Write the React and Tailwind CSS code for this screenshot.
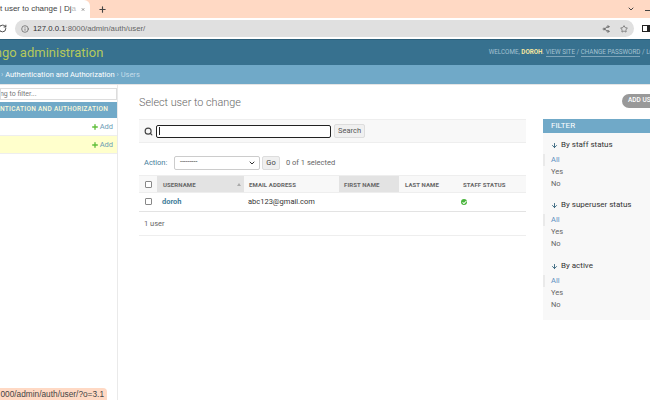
import { Search, Plus, ChevronDown, X, RotateCw, Info, Share2, Star, Check, ArrowDown } from "lucide-react"

const filters = [
    { title: "By staff status", mt: "mt-0" },
    { title: "By superuser status", mt: "mt-[7px]" },
    { title: "By active", mt: "mt-[8px]" },
]

function FilterGroup({ title, mt }) {
    return (
        <div className={mt}>
            <div className="flex items-center gap-[3px] h-[16px] pl-[8px] text-[#333] text-[8px] leading-[16px]">
                <ArrowDown size={7} strokeWidth={3} className="text-[#2f5f78]" />
                {title}
            </div>
            <div className="mt-[1px] text-[7.5px] text-[#666]">
                <div className="h-[12px] leading-[12px] pl-[6px] border-l-[2px] border-[#eaeaea] text-[#5a8fc0]">All</div>
                <div className="h-[12px] leading-[12px] pl-[8px]">Yes</div>
                <div className="h-[12px] leading-[12px] pl-[8px]">No</div>
            </div>
        </div>
    )
}

export default function App() {
    return (
        <div className="w-[650px] h-[400px] overflow-hidden relative bg-white font-['Roboto',sans-serif]">
            {/* Tabs */}
            <div className="h-[18px] bg-[#ffd9c4] flex relative">
                <div className="w-[90px] bg-white rounded-tr-[6px] flex items-center justify-end pr-[5px]">
                    <span className="text-[#444] text-[8px] whitespace-nowrap font-['Liberation_Sans',sans-serif] mr-[5px]">t user to change | Dj<span className="text-[#bbb]">a</span></span>
                    <X size={9} strokeWidth={3} className="text-[#444]" />
                </div>
                <div className="flex items-center ml-[8px]">
                    <Plus size={9} strokeWidth={3} className="text-[#444]" />
                </div>
                <div className="flex-1 flex items-center justify-end gap-[10px]">
                    <ChevronDown size={8} strokeWidth={3} className="text-[#444]" />
                    <div className="w-[5px] h-[1px] bg-[#444] mt-[3px]"></div>
                </div>
            </div>
            {/* Toolbar */}
            <div className="h-[21px] bg-white flex items-center">
                <RotateCw size={9} strokeWidth={2.5} className="text-[#444] ml-[-2px] mr-[8px]" />
                <div className="w-[620px] h-[17px] bg-[#e0e0e0] rounded-full flex items-center pl-[6px] pr-[6px]">
                    <Info size={8} className="text-[#555]" />
                    <span className="ml-[4px] text-[7.8px] text-[#333] font-['Liberation_Sans',sans-serif]">127.0.0.1<span className="text-[#666]">:8000/admin/auth/user/</span></span>
                    <Share2 size={8} className="text-[#555] ml-auto" />
                    <Star size={8} className="text-[#555] ml-[10px]" />
                </div>
                <div className="w-[8px] h-[7px] shrink-0 border-[1.5px] border-[#222] border-r-[3px] ml-[8px]"></div>
            </div>
            {/* Django header */}
            <div className="h-[26px] bg-[#37718f] border-t border-[#2c5f7a] flex items-center justify-between">
                <span className="text-[#b5c95c] text-[13px] ml-[-24px] whitespace-nowrap">Django administration</span>
                <span className="text-[6.3px] text-[#a4c2d2] whitespace-nowrap mr-[-8px]">
                    WELCOME, <b className="text-[#f5e6a0]">DOROH</b>. <span className="border-b border-[#7ea5ba]">VIEW SITE</span> / <span className="border-b border-[#7ea5ba]">CHANGE PASSWORD</span> / LOG
                </span>
            </div>
            {/* Breadcrumbs */}
            <div className="h-[19px] bg-[#70a9c8] flex items-center text-[7.5px] whitespace-nowrap text-[#c4dce8] pl-[1px] pt-[1px]">
                ›&nbsp;<span className="text-white">Authentication and Authorization</span>&nbsp;›&nbsp;Users
            </div>

            <div className="flex h-[316px] border-t border-[#e5e5e5]">
                {/* Sidebar */}
                <div className="w-[118px] shrink-0 border-r border-[#eaeaea] pt-[3px]">
                    <div className="h-[12px] w-[117px] bg-white border border-[#ddd] flex items-center overflow-hidden text-[7px] text-[#777]">
                        <span className="ml-[-1px] whitespace-nowrap">ng to filter...</span>
                    </div>
                    <div className="mt-[2px] h-[16px] bg-[#70a9c8] text-[#fdf9d8] text-[6.5px] font-medium tracking-[0.3px] flex items-center whitespace-nowrap overflow-hidden">
                        NTICATION AND AUTHORIZATION
                    </div>
                    <div className="h-[18px] border-b border-[#eee] flex items-center justify-end pr-[4px] text-[7.5px] text-[#6d9db5]">
                        <Plus size={8} strokeWidth={4} className="text-[#5fbf3a] mr-[1px]" />Add
                    </div>
                    <div className="h-[18px] bg-[#ffffcc] border-b border-[#eee] flex items-center justify-end pr-[4px] text-[7.5px] text-[#6d9db5]">
                        <Plus size={8} strokeWidth={4} className="text-[#5fbf3a] mr-[1px]" />Add
                    </div>
                </div>

                {/* Main column */}
                <div className="w-[387px] ml-[21px] shrink-0">
                    <h1 className="text-[10.8px] text-[#666] mt-[11px] h-[14px] leading-[14px] font-light">Select user to change</h1>
                    <div className="mt-[9px] h-[24px] bg-[#f8f8f8] border-y border-[#eee] flex items-center pl-[5px]">
                        <Search size={9} strokeWidth={3} className="text-[#444]" />
                        <div className="ml-[3px] w-[175px] h-[13px] bg-white border border-[#222] rounded-[2px] flex items-center pl-[2px]">
                            <div className="w-[1px] h-[8px] bg-[#222]"></div>
                        </div>
                        <div className="ml-[3px] w-[31px] h-[14px] bg-[#f0f0f0] border border-[#ddd] rounded-[2px] text-[7.5px] text-[#555] flex items-center justify-center">Search</div>
                    </div>
                    <div className="mt-[12px] h-[15px] flex items-center text-[7.5px] pl-[5px]">
                        <span className="w-[30px] text-[#447e9b]">Action:</span>
                        <div className="w-[86px] h-[14px] bg-white border border-[#ccc] rounded-[2px] flex items-center justify-between px-[5px] text-[#333]">
                            <span className="text-[7px]">---------</span>
                            <ChevronDown size={8} strokeWidth={3} className="mr-[-2px]" />
                        </div>
                        <div className="ml-[2px] w-[18px] h-[14px] bg-[#f0f0f0] border border-[#ddd] rounded-[2px] text-[#444] flex items-center justify-center">Go</div>
                        <span className="ml-[6px] text-[#666]">0 of 1 selected</span>
                    </div>
                    {/* Table */}
                    <div className="mt-[5px] h-[18px] bg-[#f8f8f8] border-y border-[#eee] flex items-stretch text-[6px] font-bold tracking-[0.1px] text-[#666]">
                        <div className="w-[18px] flex items-center pl-[6px]">
                            <div className="w-[7px] h-[7px] bg-white border border-[#888] rounded-[1px]"></div>
                        </div>
                        <div className="w-[87px] bg-[#e3e3e3] flex items-center justify-between pl-[6px] pr-[3px]">
                            USERNAME
                            <span className="w-0 h-0 border-x-[2.5px] border-x-transparent border-b-[3px] border-b-[#aaa]"></span>
                        </div>
                        <div className="w-[95px] flex items-center pl-[5px]">EMAIL ADDRESS</div>
                        <div className="w-[60px] bg-[#e3e3e3] flex items-center pl-[5px]">FIRST NAME</div>
                        <div className="w-[58px] flex items-center pl-[6px]">LAST NAME</div>
                        <div className="flex-1 flex items-center pl-[6px]">STAFF STATUS</div>
                    </div>
                    <div className="h-[19px] border-b border-[#e3e3e3] flex items-center text-[7.5px]">
                        <div className="w-[18px] pl-[6px]">
                            <div className="w-[7px] h-[7px] bg-white border border-[#888] rounded-[1px] mt-[-1px]"></div>
                        </div>
                        <div className="w-[86px] pl-[5px] font-bold text-[#447e9b] mt-[-1px]">doroh</div>
                        <div className="w-[213px] pl-[5px] text-[#333] mt-[-1px]">abc123@gmail.com</div>
                        <div className="w-[12px] h-[7px] flex items-center pl-[5px]">
                            <span className="w-[6px] h-[6px] shrink-0 rounded-full bg-[#49b53c] flex items-center justify-center">
                                <Check size={5} strokeWidth={5} className="text-white" />
                            </span>
                        </div>
                    </div>
                    <div className="h-[24px] bg-white border-b border-[#eee] flex items-center pl-[5px] text-[7.5px] text-[#666]">1 user</div>
                </div>

                {/* Filter */}
                <div className="w-[120px] ml-[17px] shrink-0 pt-[34px]">
                    <div className="h-[201px] bg-[#f8f8f8]">
                        <div className="h-[14px] bg-[#70a9c8] text-white text-[8px] flex items-center pl-[8px]">FILTER</div>
                        <div className="pt-[4px]">
                            {filters.map((f) => <FilterGroup key={f.title} title={f.title} mt={f.mt} />)}
                        </div>
                    </div>
                </div>
            </div>

            {/* Add user button */}
            <div className="absolute left-[622px] top-[94px] w-[50px] h-[14px] rounded-full bg-[#999] text-white text-[6.5px] font-medium flex items-center pl-[6px] whitespace-nowrap">ADD USER</div>
            {/* Status bubble */}
            <div className="absolute left-0 top-[388px] h-[12px] w-[107px] bg-[#ffd9c4] rounded-tr-[4px] text-[8.3px] text-[#444] flex items-center justify-end pr-[3px] whitespace-nowrap font-['Liberation_Sans',sans-serif] overflow-hidden">000/admin/auth/user/?o=3.1</div>
        </div>
    )
}
